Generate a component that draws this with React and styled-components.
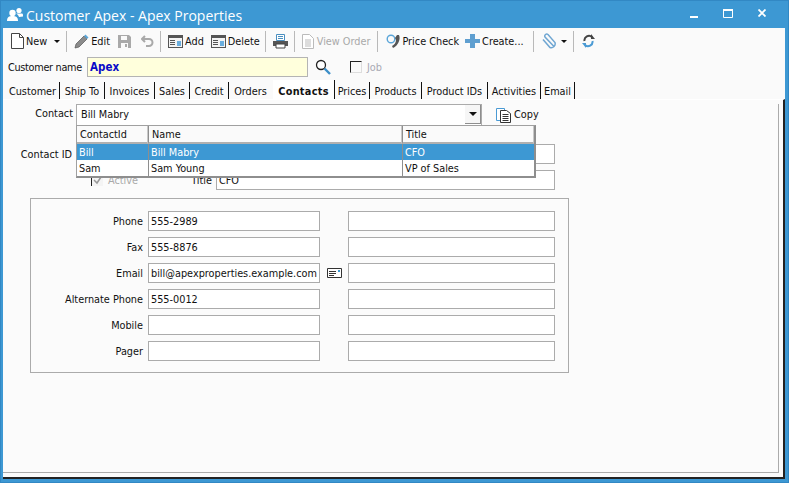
import React from 'react'
import styled, { createGlobalStyle } from 'styled-components'

const Global = createGlobalStyle`
  html, body { margin: 0; padding: 0; background: #3d98d3; }
  body { font-family: "DejaVu Sans Condensed", "DejaVu Sans", sans-serif; font-size: 10.8px; color: #111; }
`

const Win = styled.div`
  width: 789px;
  height: 483px;
  background: #3d98d3;
  display: flex;
  flex-direction: column;
  overflow: hidden;
  border: 1px solid #3288c4;
  box-sizing: border-box;
`

const TitleBar = styled.div`
  height: 27px;
  flex: none;
  display: flex;
  align-items: center;
  color: #fff;
  padding-left: 6px;
`

const TitleText = styled.div`
  font-family: "Open Sans", "Noto Sans", sans-serif;
  font-size: 14px;
  margin: 2px 0 0 3px;
`

const WinButtons = styled.div`
  margin-left: auto;
  display: flex;
  align-items: center;
  padding-right: 9px;
  margin-bottom: 3px;
`

const WinButton = styled.div`
  width: 34px;
  display: flex;
  justify-content: center;
`

const Client = styled.div`
  flex: 1;
  margin: 0 3px 3px 2px;
  background: #fafafa;
  display: flex;
  flex-direction: column;
  min-height: 0;
`

const Toolbar = styled.div`
  height: 26px;
  flex: none;
  display: flex;
  align-items: center;
  padding-left: 8px;
`

const Tool = styled.div`
  display: flex;
  align-items: center;
  gap: ${p => p.$gap ?? 2}px;
  margin-left: ${p => p.$ml || 0}px;
  color: ${p => (p.$off ? '#a9a9a9' : '#111')};
  white-space: nowrap;
`

const Sep = styled.div`
  width: 1px;
  height: 21px;
  background: #b9b9b9;
  margin: 0 ${p => p.$r ?? 7}px 0 ${p => p.$l ?? 7}px;
`

const Caret = styled.span`
  width: 0;
  height: 0;
  border-left: ${p => p.$s || 3}px solid transparent;
  border-right: ${p => p.$s || 3}px solid transparent;
  border-top: ${p => p.$s || 3}px solid #111;
  margin-left: ${p => p.$ml || 0}px;
`

const CustomerRow = styled.div`
  height: 26px;
  flex: none;
  display: flex;
  align-items: center;
  padding-left: 5px;
`

const CustomerLabel = styled.div`
  width: 79px;
  white-space: nowrap;
  letter-spacing: -0.3px;
`

const NameInput = styled.div`
  width: 217px;
  height: 18px;
  background: #ffffdc;
  border: 1px solid #b4b4b4;
  color: #0a0ac8;
  font-weight: bold;
  display: flex;
  align-items: center;
  padding-left: 2px;
  font-size: 11.5px;
`

const JobBox = styled.div`
  width: 10px;
  height: 10px;
  margin: 0 5px 0 19px;
  background: #fafafa;
  border-top: 1px solid #222;
  border-left: 1px solid #222;
  border-right: 1px solid #ddd;
  border-bottom: 1px solid #ddd;
`

const Muted = styled.span`
  color: #a9a9b4;
`

const Tabs = styled.div`
  height: 19px;
  flex: none;
  display: flex;
  padding-left: 3px;
  align-items: flex-end;
`

const Tab = styled.div`
  width: ${p => p.$w}px;
  height: ${p => (p.$active ? 19 : 17)}px;
  padding-top: ${p => (p.$active ? 4 : 2)}px;
  display: flex;
  align-items: center;
  justify-content: center;
  box-sizing: border-box;
  font-weight: ${p => (p.$active ? 'bold' : 'normal')};
  letter-spacing: ${p => (p.$active ? '0.3px' : '0')};
  background: ${p => (p.$active ? '#fff' : 'transparent')};
  border-right: 1px solid ${p => (p.$plain ? 'transparent' : '#111')};
  white-space: nowrap;
`

const PageFrame = styled.div`
  flex: 1;
  display: flex;
  min-height: 0;
  padding: 4px 4px 4px 0;
  background: #fbfbfb;
  border-top: 1px solid #fff;
  border-right: 2px solid #222;
  border-bottom: 2px solid #222;
`

const Page = styled.div`
  flex: 1;
  position: relative;
  border-right: 1px solid #ababab;
  border-bottom: 1px solid #ababab;
`

const ContactRow = styled.div`
  display: flex;
  align-items: center;
  height: 21px;
`

const RightLabel = styled.div`
  width: ${p => p.$w}px;
  flex: none;
  text-align: right;
  white-space: nowrap;
  padding-right: ${p => p.$pr ?? 5}px;
  padding-bottom: ${p => p.$pb || 0}px;
  box-sizing: border-box;
`

const Combo = styled.div`
  width: 406px;
  height: 21px;
  box-sizing: border-box;
  background: #fff;
  border: 1px solid #ababab;
  border-bottom: 0;
  display: flex;
  align-items: center;
  padding: 0 0 2px 4px;
`

const ComboButton = styled.div`
  margin-left: auto;
  width: 15px;
  height: 18px;
  display: flex;
  align-items: center;
  justify-content: center;
  background: #f6f6f6;
  border-right: 1px solid #8e8e8e;
  border-bottom: 1px solid #8e8e8e;
`

const CopyButton = styled.div`
  display: flex;
  align-items: center;
  gap: 3px;
  margin-left: 14px;
`

const Dropdown = styled.div`
  position: absolute;
  left: 73px;
  top: 21px;
  width: 460px;
  box-sizing: border-box;
  background: #fff;
  border: 1px solid #a0a0a0;
  border-right: 2px solid #8e8e8e;
  border-bottom: 2px solid #8e8e8e;
  z-index: 2;
`

const DropRow = styled.div`
  display: grid;
  grid-template-columns: 71px 254px 1fr;
  height: ${p => (p.$head ? 18 : 16)}px;
  background: ${p => (p.$head ? '#fafafa' : p.$sel ? '#3d98d3' : '#fff')};
  color: ${p => (p.$sel ? '#fff' : '#111')};
  align-items: stretch;
`

const DropCell = styled.div`
  display: flex;
  align-items: center;
  padding-left: ${p => (p.$head ? 3 : 2)}px;
  border-left: ${p => (p.$first ? '0' : '1px solid #8e8e8e')};
  box-sizing: border-box;
  ${p => p.$head && 'padding-top: 1px; border-bottom: 2px solid #b0b0b0; border-right: 1px solid #c8c8c8;'}
`

const Body = styled.div`
  padding: 19px 0 0 0;
  display: flex;
  flex-direction: column;
  gap: 6px;
`

const TopRow = styled.div`
  display: flex;
  align-items: center;
  height: 20px;
`

const Field = styled.div`
  height: 20px;
  width: ${p => p.$w}px;
  box-sizing: border-box;
  flex: none;
  background: #fff;
  border: 1px solid #ababab;
  padding-left: 2px;
  display: flex;
  align-items: center;
  white-space: nowrap;
  overflow: hidden;
`

const CheckWrap = styled.div`
  display: flex;
  align-items: center;
  gap: 5px;
  width: 100px;
  margin-left: 88px;
  color: #a9a9a9;
`

const CheckBox = styled.div`
  width: 11px;
  height: 12px;
  background: #f4f4f4;
  border-left: 1px solid #222;
  display: flex;
  align-items: center;
  justify-content: center;
`

const GroupBox = styled.div`
  width: 539px;
  height: 175px;
  box-sizing: border-box;
  margin: 2px 0 0 27px;
  border: 1px solid #ababab;
  padding-top: 12px;
  display: flex;
  flex-direction: column;
  gap: 6px;
`

const FormRow = styled.div`
  display: flex;
  align-items: center;
  height: 20px;
`

const IconSlot = styled.div`
  width: 28px;
  flex: none;
  display: flex;
  justify-content: center;
`

const NewIcon = () => (
  <svg width="13" height="16" viewBox="0 0 13 16"><path d="M.5.5h8l4 4v11H.5z" fill="#fff" stroke="#444" /><path d="M8.5.5v4h4" fill="none" stroke="#444" /></svg>
)
const EditIcon = () => (
  <svg width="15" height="15" viewBox="0 0 15 15"><path d="M1 14l1-4 8-8 3 3-8 8z" fill="#8b8b8b" stroke="#555" strokeWidth=".7" /><path d="M10 2l1.5-1.5 3 3L13 5z" fill="#5aa5d8" /></svg>
)
const SaveIcon = () => (
  <svg width="13" height="13" viewBox="0 0 13 13"><path d="M0 0h11l2 2v11H0z" fill="#a9a9a9" /><path d="M3 1h6v4H3zM3 8h7v5H3z" fill="#fafafa" /><path d="M7 9h2v3H7z" fill="#a9a9a9" /></svg>
)
const UndoIcon = () => (
  <svg width="13" height="12" viewBox="0 0 13 12"><path d="M4 1L1 4l3 3M1.500 4H8a3.500 3.500 0 010 7H5" fill="none" stroke="#a9a9a9" strokeWidth="2" /></svg>
)
const CardIcon = () => (
  <svg width="15" height="13" viewBox="0 0 15 13"><path d="M0 0h15v13H0z" fill="#555" /><path d="M1 3h13v9H1z" fill="#f4f4f4" /><path d="M2 5h5v1H2zM2 7h5v1H2zM2 9h5v1H2z" fill="#555" /><path d="M9 6h4v5H9z" fill="#6aaede" /></svg>
)
const PrinterIcon = () => (
  <svg width="15" height="15" viewBox="0 0 15 15"><path d="M3.500.500h8v6h-8z" fill="#fff" stroke="#4a8fc0" /><path d="M5 2.500h5M5 4.500h5" stroke="#4a8fc0" /><path d="M0 7h15v5H0z" fill="#555" /><path d="M3 10h9v4H3z" fill="#fff" stroke="#444" /></svg>
)
const DocIcon = () => (
  <svg width="12" height="15" viewBox="0 0 12 15"><path d="M.500.500h7l4 4v10H.500z" fill="#fff" stroke="#bbb" /><path d="M3 6h6M3 8h6M3 10h6M3 12h6" stroke="#bbb" /></svg>
)
const PhoneIcon = () => (
  <svg width="15" height="15" viewBox="0 0 15 15"><circle cx="5" cy="5" r="3.800" fill="none" stroke="#5aa5d8" strokeWidth="1.400" /><path d="M13 1c2 4-1 11-6 13l-1-2c2-1 4-3 4-6l-1-2 2-3z" fill="#555" /></svg>
)
const PlusIcon = () => (
  <svg width="15" height="14" viewBox="0 0 15 14"><path d="M5 0h5v5h5v4h-5v5H5V9H0V5h5z" fill="#5f9fd0" /></svg>
)
const ClipIcon = () => (
  <svg width="15" height="16" viewBox="0 0 15 16"><path d="M13 13L4 3.500a2 2 0 013-2.500l7 8a4 4 0 01-5 5L2 6" transform="translate(0 .5)" fill="none" stroke="#6fa6d2" strokeWidth="1.500" /></svg>
)
const RefreshIcon = () => (
  <svg width="13" height="14" viewBox="0 0 13 14"><path d="M10 3a4.500 4.500 0 00-7.500 4" fill="none" stroke="#444" strokeWidth="2" /><path d="M3 11a4.500 4.500 0 007.500-4" fill="none" stroke="#4a9ad4" strokeWidth="2" /><path d="M9 0v5h4z" fill="#444" /><path d="M4 14V9H0z" fill="#4a9ad4" /></svg>
)
const SearchIcon = () => (
  <svg width="16" height="16" viewBox="0 0 16 16"><circle cx="6" cy="6" r="4.500" fill="#fff" stroke="#222" strokeWidth="1.300" /><path d="M9.500 9.500L15 15" stroke="#3d8fc8" strokeWidth="2.400" /></svg>
)
const PeopleIcon = () => (
  <svg width="16" height="15" viewBox="0 0 16 15"><circle cx="5.500" cy="6" r="3.200" fill="#fff" /><path d="M0 14c0-4 2-5 5.500-5s5.500 1 5.500 5z" fill="#fff" /><circle cx="12" cy="3.500" r="2.600" fill="#fff" /><path d="M9 6.500h6c1 0 1 1 1 3l-4 .5c-.5-2-2-3-3-3.500z" fill="#fff" /></svg>
)
const CopyIcon = () => (
  <svg width="15" height="16" viewBox="0 0 15 16"><path d="M.500 1.500h8v12h-8z" fill="#fff" stroke="#4a9ad4" /><path d="M4.500 3.500h6l4 3v9h-10z" fill="#fff" stroke="#333" /><path d="M6.500 7.500h6M6.500 9.500h6M6.500 11.500h6M6.500 13.500h6" stroke="#333" /></svg>
)
const NoteIcon = () => (
  <svg width="15" height="10" viewBox="0 0 15 10"><path d="M.500.500h14v9H.500z" fill="#fff" stroke="#333" /><path d="M2 3.500h7M2 5.500h7M2 7.500h5" stroke="#333" /><path d="M11 2h2v2h-2z" fill="#3d98d3" /></svg>
)

const tabs = [
  ['Customer', 54], ['Ship To', 45], ['Invoices', 50], ['Sales', 35], ['Credit', 39], ['Orders', 44, false, true],
  ['Contacts', 62, true], ['Prices', 35], ['Products', 52], ['Product IDs', 66], ['Activities', 53], ['Email', 34],
]

const rows = [
  ['Phone', '555-2989'], ['Fax', '555-8876'], ['Email', 'bill@apexproperties.example.com', true],
  ['Alternate Phone', '555-0012'], ['Mobile', ''], ['Pager', ''],
]

export default function App() {
  return (
    <Win>
      <Global />
      <TitleBar>
        <PeopleIcon />
        <TitleText>Customer Apex - Apex Properties</TitleText>
        <WinButtons>
          <WinButton><svg width="8" height="9" viewBox="0 0 8 9"><path d="M0 7h8v2H0z" fill="#fff" /></svg></WinButton>
          <WinButton><svg width="10" height="9" viewBox="0 0 10 9"><path d="M.500 1h9v7.500h-9z" fill="none" stroke="#fff" /><path d="M0 0h10v2H0z" fill="#fff" /></svg></WinButton>
          <WinButton><svg width="8" height="8" viewBox="0 0 8 8"><path d="M.500.500l7 7M7.500.500l-7 7" stroke="#fff" strokeWidth="1.800" /></svg></WinButton>
        </WinButtons>
      </TitleBar>
      <Client>
        <Toolbar>
          <Tool><NewIcon />New</Tool>
          <Caret $ml={7} />
          <Sep $l={6} $r={7} />
          <Tool><EditIcon />Edit</Tool>
          <Tool $ml={8}><SaveIcon /></Tool>
          <Tool $ml={10}><UndoIcon /></Tool>
          <Sep $l={6} />
          <Tool><CardIcon />Add</Tool>
          <Tool $ml={7}><CardIcon />Delete</Tool>
          <Sep $l={5} />
          <Tool><PrinterIcon /></Tool>
          <Sep $l={6} />
          <Tool $off $gap={3}><DocIcon />View Order</Tool>
          <Sep />
          <Tool $ml={1} $gap={1}><PhoneIcon />Price Check</Tool>
          <Tool $ml={6}><PlusIcon />Create...</Tool>
          <Sep $l={9} />
          <Tool><ClipIcon /></Tool>
          <Caret $ml={5} />
          <Sep $l={6} $r={8} />
          <Tool><RefreshIcon /></Tool>
        </Toolbar>
        <CustomerRow>
          <CustomerLabel>Customer name</CustomerLabel>
          <NameInput>Apex</NameInput>
          <Tool $ml={7}><SearchIcon /></Tool>
          <JobBox />
          <Muted>Job</Muted>
        </CustomerRow>
        <Tabs>
          {tabs.map(([name, w, active, plain]) => (
            <Tab key={name} $w={w} $active={active} $plain={plain}>{name}</Tab>
          ))}
        </Tabs>
        <PageFrame>
          <Page>
            <ContactRow>
              <RightLabel $w={73} $pr={3} $pb={2}>Contact</RightLabel>
              <Combo>
                Bill Mabry
                <ComboButton><Caret $s={4} /></ComboButton>
              </Combo>
              <CopyButton><CopyIcon />Copy</CopyButton>
            </ContactRow>
            <Dropdown>
              <DropRow $head>
                <DropCell $head $first>ContactId</DropCell>
                <DropCell $head>Name</DropCell>
                <DropCell $head>Title</DropCell>
              </DropRow>
              <DropRow $sel>
                <DropCell $first>Bill</DropCell>
                <DropCell>Bill Mabry</DropCell>
                <DropCell>CFO</DropCell>
              </DropRow>
              <DropRow>
                <DropCell $first>Sam</DropCell>
                <DropCell>Sam Young</DropCell>
                <DropCell>VP of Sales</DropCell>
              </DropRow>
            </Dropdown>
            <Body>
              <TopRow>
                <RightLabel $w={73} $pr={4}>Contact ID</RightLabel>
                <Field $w={479} />
              </TopRow>
              <TopRow>
                <CheckWrap>
                  <CheckBox>
                    <svg width="9" height="9" viewBox="0 0 9 9"><path d="M1 4l3 3 4-6" fill="none" stroke="#999" strokeWidth="1.500" /></svg>
                  </CheckBox>
                  Active
                </CheckWrap>
                <RightLabel $w={25} $pr={4}>Title</RightLabel>
                <Field $w={339}>CFO</Field>
              </TopRow>
              <GroupBox>
                {rows.map(([label, value, note]) => (
                  <FormRow key={label}>
                    <RightLabel $w={117}>{label}</RightLabel>
                    <Field $w={172}>{value}</Field>
                    <IconSlot>{note && <NoteIcon />}</IconSlot>
                    <Field $w={207} />
                  </FormRow>
                ))}
              </GroupBox>
            </Body>
          </Page>
        </PageFrame>
      </Client>
    </Win>
  )
}
